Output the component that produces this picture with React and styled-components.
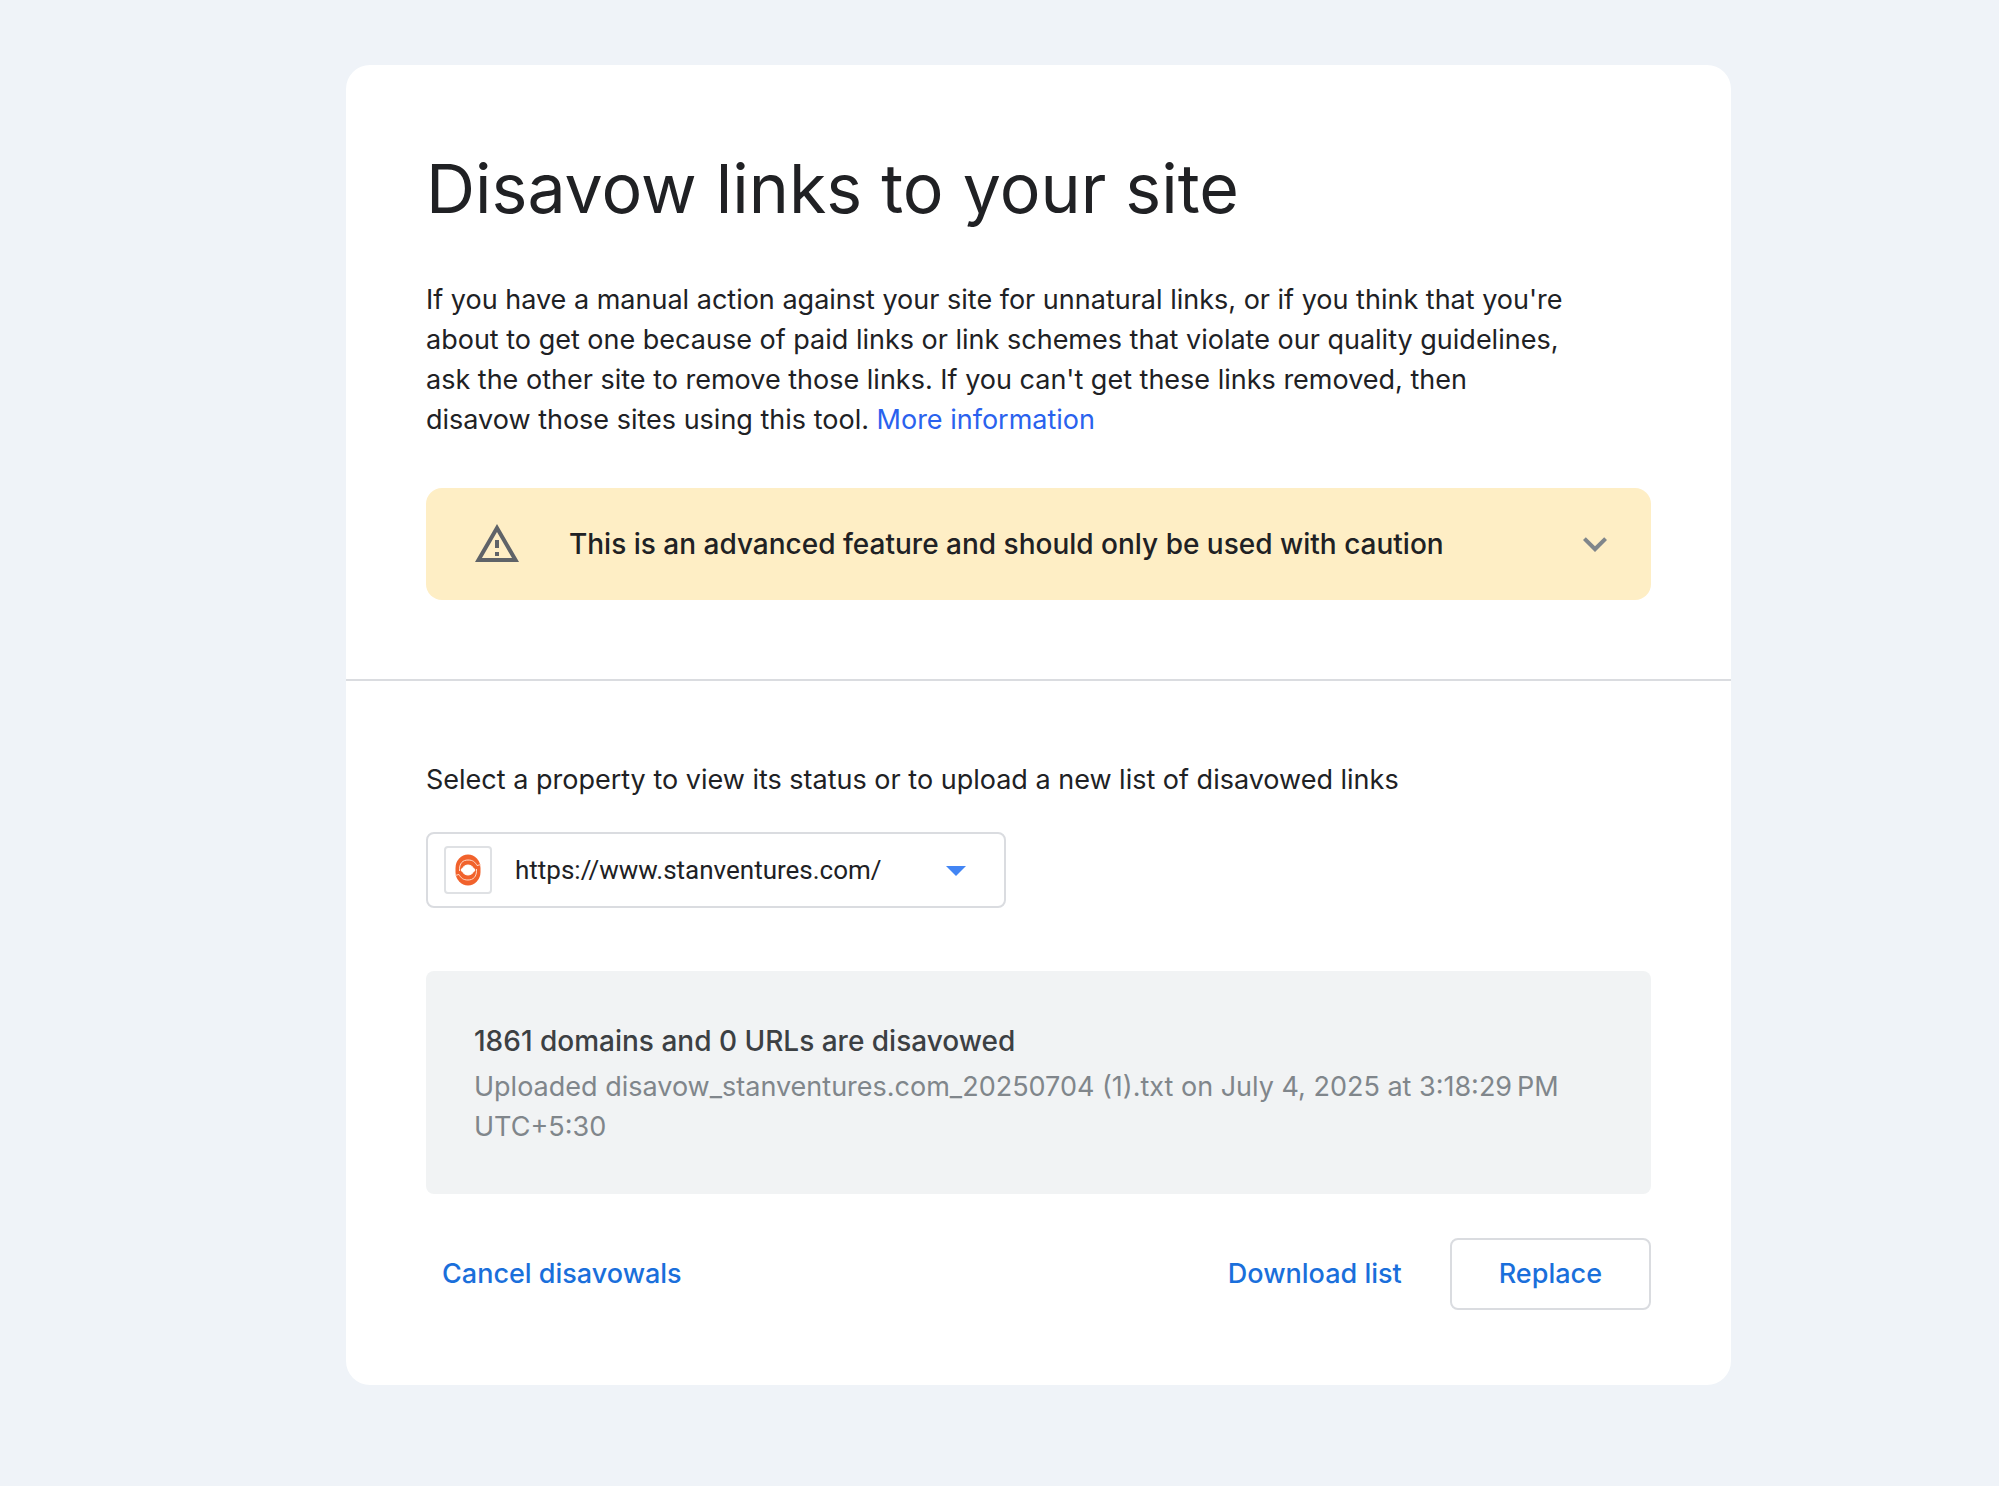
import { useState } from 'react'
import styled, { createGlobalStyle } from 'styled-components'

const GlobalStyle = createGlobalStyle`
* {
  box-sizing: border-box;
}

body {
  margin: 0;
  background: #eff3f8;
  color: #202124;
  font-family: "Google Sans", Inter, sans-serif;
  font-size: 27px;
  line-height: 40px;
}
`;

const Page = styled.main`
padding: 65px 0 101px 78px;
`;

const Card = styled.div`
max-width: 1385px;
margin: 0 auto;
background: #fff;
border-radius: 24px;
`;

const Section = styled.section`
padding: ${(props) => props.$padding};

& + & {
  border-top: 2px solid #dadce0;
}
`;

const Title = styled.h1`
margin: 0 0 48px;
font-size: 68px;
font-weight: 400;
line-height: 88px;
`;

const Intro = styled.p`
max-width: 1168px;
margin: 0 0 48px;
`;

const InfoLink = styled.a`
color: #2a62ee;
text-decoration: none;
`;

const Warning = styled.button`
display: flex;
align-items: center;
gap: 48px;
width: 100%;
padding: 32px 32px 32px 47px;
border: 0;
border-radius: 16px;
background: #feeec5;
color: #202124;
font: inherit;
font-size: 28px;
font-weight: 500;
text-align: left;
cursor: pointer;
`;

const WarningText = styled.span`
flex: 1;
`;

const Icon = styled.svg`
flex: none;
width: 48px;
height: 48px;
fill: ${(props) => props.$color};
`;

const Label = styled.label`
display: block;
margin-bottom: 32px;
`;

const SelectBox = styled.div`
display: flex;
align-items: center;
max-width: 580px;
height: 76px;
margin-bottom: 63px;
padding: 0 24px 0 16px;
border: 2px solid #dadce0;
border-radius: 8px;
`;

const Favicon = styled.span`
display: flex;
align-items: center;
justify-content: center;
flex: none;
width: 48px;
height: 48px;
border: 2px solid #dfe1e4;
border-radius: 4px;
`;

const PropertySelect = styled.select`
flex: 1;
min-width: 0;
height: 100%;
padding: 0 0 0 23px;
border: 0;
outline: 0;
appearance: none;
background: transparent;
color: #202124;
font-family: Roboto, sans-serif;
font-size: 26px;
`;

const Status = styled.div`
margin-bottom: 44px;
padding: 48px 48px 47px;
border-radius: 8px;
background: #f1f3f4;
`;

const StatusTitle = styled.h2`
margin: 0 0 4px;
color: #3c4043;
font-size: 28px;
font-weight: 500;
line-height: 44px;
`;

const StatusText = styled.p`
margin: 0;
color: #80868b;
`;

const Actions = styled.div`
display: flex;
align-items: center;
gap: 32px;
`;

const Button = styled.button`
height: 72px;
padding: 0 ${(props) => (props.$outlined ? 47 : 16)}px;
margin-right: ${(props) => (props.$first ? 'auto' : 0)};
border: ${(props) => (props.$outlined ? '2px solid #dadce0' : 0)};
border-radius: 8px;
background: transparent;
color: #1a6fdb;
font: inherit;
font-weight: 500;
cursor: pointer;
`;

const sites = ['https://www.stanventures.com/']

function SiteLogo() {
  return (
    <svg width="26" height="32" viewBox="0 0 26 32" fill="none" aria-hidden="true">
      <rect x="0.5" y="0.5" width="25" height="31" rx="12.5" ry="13.5" fill="#f1622c" />
      <path d="M6 16C8 13 10 11 13 11C16 11 18 13 20 16C18 19 16 21 13 21C10 21 8 19 6 16Z" fill="#fff" stroke="#fff" />
      <path d="M4.5 17C4 9 8 6 13 6C18 6 20 8 22 11.5L26 10.5" stroke="#ffd9c9" strokeWidth="1" />
      <path d="M21.5 15C22 23 18 26 13 26C8 26 6 24 4 20.5L0 21.5" stroke="#ffd9c9" strokeWidth="1" />
    </svg>
  )
}

function App() {
  const [open, setOpen] = useState(false)
  const [site, setSite] = useState(sites[0])

  return (
    <>
      <GlobalStyle />
      <Page>
        <Card>
          <Section $padding="79px 80px">
            <Title>Disavow links to your site</Title>
            <Intro>
              If you have a manual action against your site for unnatural links, or if you think that you're
              about to get one because of paid links or link schemes that violate our quality guidelines,
              ask the other site to remove those links. If you can't get these links removed, then
              <br />
              disavow those sites using this tool. <InfoLink href="#info">More information</InfoLink>
            </Intro>
            <Warning type="button" aria-expanded={open} onClick={() => setOpen(!open)}>
              <Icon viewBox="0 0 24 24" $color="#5f6368">
                <path d="M12 5.99L19.53 19H4.47L12 5.99M12 2L1 21h22L12 2zm1 14h-2v2h2v-2zm0-6h-2v4h2v-4z" />
              </Icon>
              <WarningText>This is an advanced feature and should only be used with caution</WarningText>
              <Icon viewBox="0 0 24 24" $color="#80868b">
                <path d="M16.59 8.59L12 13.17 7.41 8.59 6 10l6 6 6-6z" />
              </Icon>
            </Warning>
          </Section>
          <Section $padding="79px 80px 75px">
            <Label htmlFor="property">Select a property to view its status or to upload a new list of disavowed links</Label>
            <SelectBox>
              <Favicon>
                <SiteLogo />
              </Favicon>
              <PropertySelect id="property" value={site} onChange={(e) => setSite(e.target.value)}>
                {sites.map((el) => <option key={el}>{el}</option>)}
              </PropertySelect>
              <Icon viewBox="0 0 24 24" $color="#4285f4">
                <path d="M7 10l5 5 5-5z" />
              </Icon>
            </SelectBox>
            <Status>
              <StatusTitle>1861 domains and 0 URLs are disavowed</StatusTitle>
              <StatusText>Uploaded disavow_stanventures.com_20250704 (1).txt on July 4, 2025 at 3:18:29{'\u202f'}PM UTC+5:30</StatusText>
            </Status>
            <Actions>
              <Button type="button" $first>Cancel disavowals</Button>
              <Button type="button">Download list</Button>
              <Button type="button" $outlined>Replace</Button>
            </Actions>
          </Section>
        </Card>
      </Page>
    </>
  )
}

export default App
